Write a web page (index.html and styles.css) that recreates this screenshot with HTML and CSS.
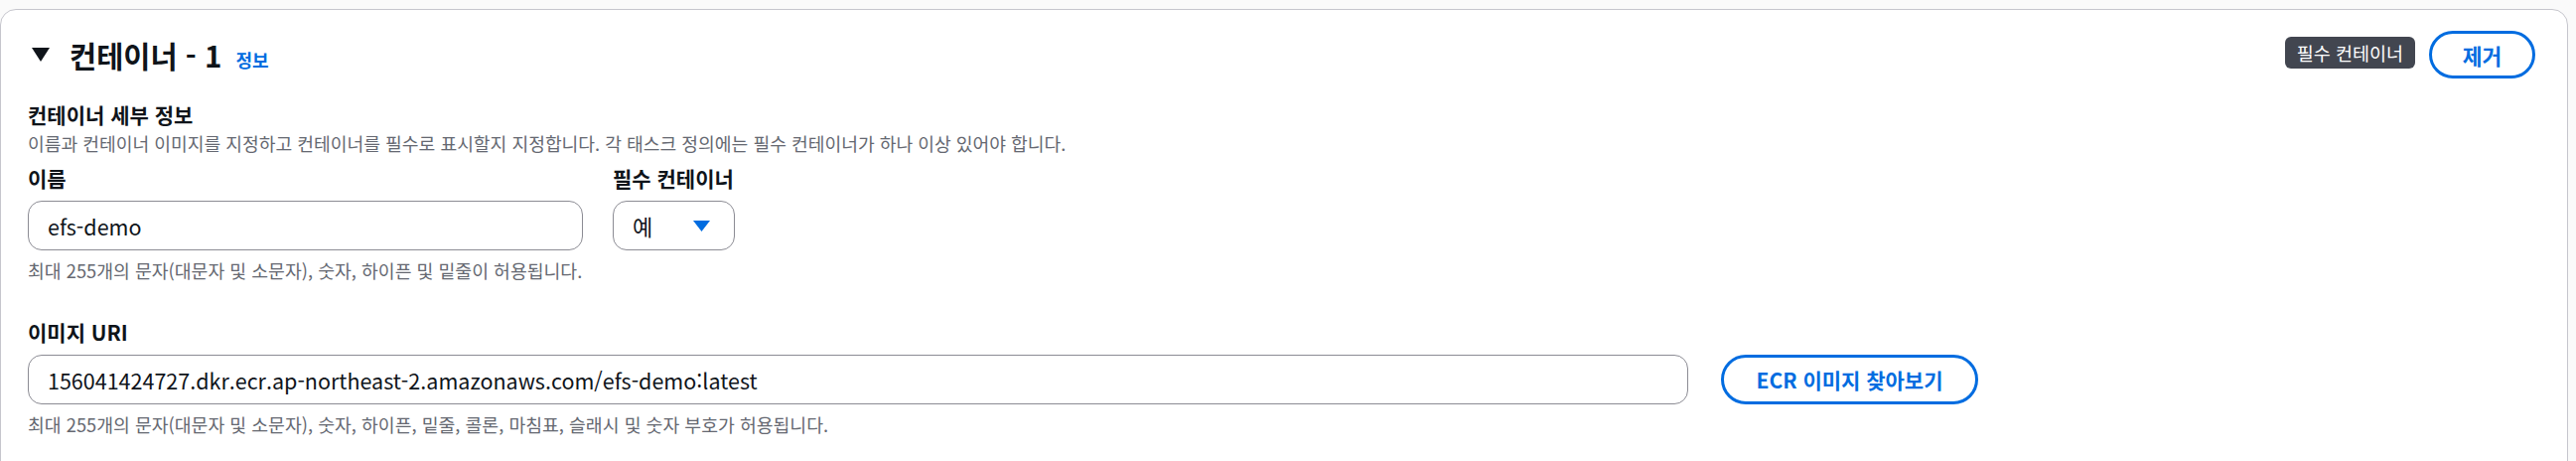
FILE: index.html
```html
<!DOCTYPE html>
<html lang="ko">
<head>
<meta charset="utf-8">
<title>컨테이너 - 1</title>
<link rel="stylesheet" href="styles.css">
</head>
<body>
<div class="page">
  <section class="card">
    <header class="card-header">
      <div class="title-group">
        <svg class="caret" width="18" height="14" viewBox="0 0 18 14" aria-hidden="true"><path d="M0 0H18L9 14Z" fill="#0f141a"/></svg>
        <div class="title-text">
          <h2 class="title">컨테이너 - 1</h2>
          <a class="info">정보</a>
        </div>
      </div>
      <div class="actions">
        <span class="badge">필수 컨테이너</span>
        <button class="btn btn-remove">제거</button>
      </div>
    </header>
    <div class="card-body">
      <h3 class="section-title">컨테이너 세부 정보</h3>
      <p class="section-desc">이름과 컨테이너 이미지를 지정하고 컨테이너를 필수로 표시할지 지정합니다. 각 태스크 정의에는 필수 컨테이너가 하나 이상 있어야 합니다.</p>
      <div class="row-name">
        <div class="field field-name">
          <label class="label">이름</label>
          <div class="input">efs-demo</div>
          <p class="hint">최대 255개의 문자(대문자 및 소문자), 숫자, 하이픈 및 밑줄이 허용됩니다.</p>
        </div>
        <div class="field field-essential">
          <label class="label">필수 컨테이너</label>
          <div class="select">
            <span class="select-value">예</span>
            <svg class="select-caret" width="17" height="11" viewBox="0 0 17 11" aria-hidden="true"><path d="M0 0H17L8.5 11Z" fill="#006ce0"/></svg>
          </div>
        </div>
      </div>
      <div class="field field-uri">
        <label class="label">이미지 URI</label>
        <div class="input-row">
          <div class="input input-uri">156041424727.dkr.ecr.ap-northeast-2.amazonaws.com/efs-demo:latest</div>
          <button class="btn btn-ecr">ECR 이미지 찾아보기</button>
        </div>
        <p class="hint">최대 255개의 문자(대문자 및 소문자), 숫자, 하이픈, 밑줄, 콜론, 마침표, 슬래시 및 숫자 부호가 허용됩니다.</p>
      </div>
    </div>
  </section>
</div>
</body>
</html>
```

FILE: styles.css
```css
* {
  box-sizing: border-box;
}

html, body {
  margin: 0;
  padding: 0;
}

body {
  background: #fafafa;
  font-family: "Noto Sans CJK KR", "Noto Sans", sans-serif;
  color: #0f141a;
  overflow: hidden;
}

.page {
  padding: 9px 8px 0 0;
}

.card {
  background: #ffffff;
  border: 1px solid #c6c6cd;
  border-radius: 16px;
  min-height: 520px;
  padding: 21px 32px 0 27px;
}

.card-header {
  display: flex;
  align-items: center;
  justify-content: space-between;
  height: 48px;
}

.title-group {
  display: flex;
  align-items: center;
}

.caret {
  display: block;
  margin-left: 4px;
  margin-right: 20px;
}

.title-text {
  display: flex;
  align-items: baseline;
}

.title {
  margin: 0;
  font-size: 29.5px;
  font-weight: 700;
  line-height: 48px;
}

.info {
  margin-left: 14px;
  font-size: 18px;
  font-weight: 700;
  color: #006ce0;
}

.actions {
  display: flex;
  align-items: center;
  gap: 14px;
}

.badge {
  display: inline-flex;
  align-items: center;
  height: 32px;
  padding: 0 12px;
  border-radius: 6px;
  background: #424650;
  color: #ffffff;
  font-size: 18.5px;
  margin-top: -4px;
}

.btn {
  font-family: inherit;
  font-weight: 700;
  color: #006ce0;
  background: #ffffff;
  border: 3px solid #006ce0;
  cursor: pointer;
}

.btn-remove {
  height: 48px;
  width: 107px;
  padding: 0;
  border-radius: 24px;
  font-size: 21.5px;
}

.card-body {
  display: flex;
  flex-direction: column;
}

.section-title {
  margin: 23px 0 0;
  font-size: 21px;
  font-weight: 700;
  line-height: 26px;
}

.section-desc {
  margin: 5px 0 0;
  font-size: 18.2px;
  line-height: 22px;
  color: #656871;
}

.row-name {
  display: flex;
  gap: 30px;
  margin-top: 12px;
}

.field {
  display: flex;
  flex-direction: column;
}

.field-name {
  width: 559px;
}

.field-essential {
  width: 123px;
}

.label {
  font-size: 21px;
  font-weight: 700;
  line-height: 24px;
}

.input {
  margin-top: 11px;
  height: 50px;
  border: 1px solid #8c8c94;
  border-radius: 14px;
  padding: 0 19px;
  display: flex;
  align-items: center;
  font-size: 21.5px;
  color: #0f141a;
  white-space: nowrap;
}

.select {
  margin-top: 11px;
  height: 50px;
  border: 1px solid #8c8c94;
  border-radius: 14px;
  padding: 0 24px 0 19px;
  display: flex;
  align-items: center;
  justify-content: space-between;
}

.select-value {
  font-size: 22px;
}

.select-caret {
  display: block;
}

.hint {
  margin: 9px 0 0;
  font-size: 18.3px;
  line-height: 22px;
  color: #656871;
  white-space: nowrap;
}

.field-uri {
  margin-top: 39px;
}

.input-row {
  display: flex;
  align-items: flex-end;
  gap: 33px;
}

.input-uri {
  width: 1672px;
}

.btn-ecr {
  height: 50px;
  width: 259px;
  padding: 0;
  border-radius: 25px;
  font-size: 21px;
}
```
